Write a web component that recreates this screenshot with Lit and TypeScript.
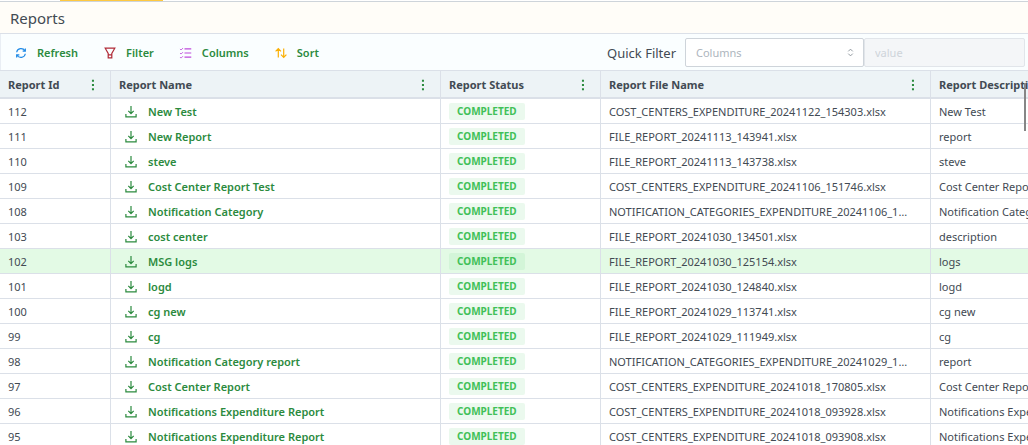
import { LitElement, html, css, svg } from "lit";
import { customElement, property } from "lit/decorators.js";

interface Report {
  id: number;
  name: string;
  file: string;
  description: string;
}

const report = (id: number, name: string, file: string, description: string): Report => ({ id, name, file, description });

const REPORTS: Report[] = [
  report(112, "New Test", "COST_CENTERS_EXPENDITURE_20241122_154303.xlsx", "New Test"),
  report(111, "New Report", "FILE_REPORT_20241113_143941.xlsx", "report"),
  report(110, "steve", "FILE_REPORT_20241113_143738.xlsx", "steve"),
  report(109, "Cost Center Report Test", "COST_CENTERS_EXPENDITURE_20241106_151746.xlsx", "Cost Center Report Test"),
  report(108, "Notification Category", "NOTIFICATION_CATEGORIES_EXPENDITURE_20241106_151612.xlsx", "Notification Category"),
  report(103, "cost center", "FILE_REPORT_20241030_134501.xlsx", "description"),
  report(102, "MSG logs", "FILE_REPORT_20241030_125154.xlsx", "logs"),
  report(101, "logd", "FILE_REPORT_20241030_124840.xlsx", "logd"),
  report(100, "cg new", "FILE_REPORT_20241029_113741.xlsx", "cg new"),
  report(99, "cg", "FILE_REPORT_20241029_111949.xlsx", "cg"),
  report(98, "Notification Category report", "NOTIFICATION_CATEGORIES_EXPENDITURE_20241029_111502.xlsx", "report"),
  report(97, "Cost Center Report", "COST_CENTERS_EXPENDITURE_20241018_170805.xlsx", "Cost Center Report"),
  report(96, "Notifications Expenditure Report", "COST_CENTERS_EXPENDITURE_20241018_093928.xlsx", "Notifications Expenditure"),
  report(95, "Notifications Expenditure Report", "COST_CENTERS_EXPENDITURE_20241018_093908.xlsx", "Notifications Expenditure"),
];

const SELECTED_ID = 102;

const ICONS: Record<string, unknown> = {
  refresh: svg`<path d="M2.2 7A6 6 0 0 1 13.2 5M13.8 9A6 6 0 0 1 2.8 11M13.8 2v3.6h-3.6M2.2 14v-3.6h3.6"/>`,
  filter: svg`<path d="M1.6 1.6h12.8L10.4 8.6v5.8H5.6V8.6zM5.6 10.4h4.8"/>`,
  columns: svg`<path d="M6 2.6h9M6 8h9M6 13.4h9"/><path d="m0 2.6 1.4 1.4L4 1.4M0 8l1.4 1.4L4 6.8M0 13.4l1.4 1.4L4 12.2" stroke-width="1.1"/>`,
  sort: svg`<path d="M4.4 14V2.4M.8 5.8l3.6-3.6L8 5.8M11.6 2v11.6M8 10.2l3.6 3.6 3.6-3.6"/>`,
  download: svg`<path d="M8 0v10M4.4 6.6 8 10.2l3.6-3.6M1.2 10.6v3.8h13.6v-3.8"/>`,
  chevrons: svg`<path d="M4 6 8 2l4 4M4 10l4 4 4-4"/>`,
  more: svg`<path d="M6.6 1h2.7v2.7H6.6zM6.6 6.6h2.7v2.7H6.6zM6.6 12.3h2.7V15H6.6z" fill="currentColor" stroke="none"/>`,
};

@customElement("ui-icon")
class UiIcon extends LitElement {
  @property() name = "";

  static styles = css`
    :host { display: inline-flex; flex: none; width: 12px; height: 12px; }
    svg { width: 100%; height: 100%; fill: none; stroke: currentColor; stroke-width: 1.6; overflow: visible; }
  `;

  render() {
    return html`<svg viewBox="0 0 16 16" aria-hidden="true">${ICONS[this.name]}</svg>`;
  }
}

@customElement("app-root")
class AppRoot extends LitElement {
  static styles = css`
    :host {
      display: flex;
      flex-direction: column;
      height: 100vh;
      overflow: hidden;
      background: #fff;
      color: #424a53;
      font: 11px/16px "Noto Sans", sans-serif;
    }
    * { box-sizing: border-box; }
    button, input, select { font: inherit; }
    button { padding: 0; border: 0; background: none; color: #2b8a3e; cursor: pointer; }
    .tabs { flex: none; height: 2px; padding-left: 60px; border-bottom: 1px solid #ced4da; }
    .active-tab { width: 103px; height: 1px; background: #ffc940; }
    .title {
      flex: none;
      margin: 0;
      padding: 4px 10px 3px;
      border-bottom: 1px solid #dbe0e8;
      background: #fffdf8;
      font-size: 15px;
      line-height: 24px;
      font-weight: 400;
    }
    .toolbar {
      flex: none;
      display: flex;
      align-items: center;
      justify-content: space-between;
      height: 36px;
      padding: 1px 3px 0 14px;
      border-left: 1px solid #e9eef4;
      background: #fafeff;
    }
    .actions { display: flex; gap: 26px; }
    .action { display: flex; align-items: center; gap: 10px; font-weight: 600; }
    .blue { color: #228be6; }
    .red { color: #b02a37; }
    .purple { color: #be4bdb; }
    .orange { color: #fab005; }
    .quick { display: flex; align-items: center; }
    .quick-label { margin-right: 9px; font-size: 13px; }
    .picker { position: relative; display: flex; }
    .picker select, .value {
      height: 29px;
      padding: 0 10px;
      border: 1px solid #ced4da;
      border-radius: 2px;
    }
    .picker select { width: 179px; appearance: none; background: #fff; color: #adb5bd; }
    .picker ui-icon { position: absolute; right: 9px; top: 10px; width: 9px; height: 9px; color: #868e96; pointer-events: none; }
    .value { width: 161px; border-color: #e1e5ea; background: #f4f6f8; }
    .value::placeholder { color: #ced4da; opacity: 1; }
    .grid { position: relative; flex: 1; min-height: 0; overflow: hidden; border-top: 1px solid #dbe0e8; }
    table { width: 100%; min-width: 1131px; table-layout: fixed; border-collapse: separate; border-spacing: 0; }
    .col-id { width: 111px; }
    .col-wide { width: 330px; }
    .col-status { width: 160px; }
    th, td {
      padding: 1px 8px 0;
      border-right: 1px solid #dbe0e8;
      border-bottom: 1px solid #dbe0e8;
      text-align: left;
      white-space: nowrap;
      overflow: hidden;
      text-overflow: ellipsis;
    }
    th { height: 28px; padding-top: 2px; border-bottom-width: 2px; background: #edf3f6; font-weight: 700; }
    td { height: 25px; padding-right: 20px; }
    .head { display: flex; align-items: center; justify-content: space-between; padding-right: 3px; }
    .head button { display: flex; }
    .selected td { background: #e3fae5; }
    .name { display: flex; align-items: center; gap: 11px; padding-left: 6px; }
    .name button { display: flex; }
    .name a { color: #2b8a3e; font-weight: 600; text-decoration: none; }
    .badge {
      display: block;
      width: max-content;
      padding: 0 8px;
      border-radius: 2px;
      background: #ebf9ee;
      color: #40c057;
      font-size: 10px;
      line-height: 17px;
      font-weight: 700;
    }
    .selected .badge { background: #d3f5d8; }
    .thumb { position: absolute; top: 12px; right: 2px; width: 2px; height: 48px; background: #868686; }
  `;

  private action(icon: string, tone: string, label: string) {
    return html`<button class="action"><ui-icon class=${tone} name=${icon}></ui-icon>${label}</button>`;
  }

  private heading(label: string) {
    return html`<th scope="col">
      <div class="head">${label}<button aria-label="${label} menu"><ui-icon name="more"></ui-icon></button></div>
    </th>`;
  }

  private row(r: Report) {
    return html`<tr class=${r.id === SELECTED_ID ? "selected" : ""}>
      <td>${r.id}</td>
      <td>
        <div class="name">
          <button aria-label="Download ${r.name}"><ui-icon name="download"></ui-icon></button>
          <a href="#report-${r.id}">${r.name}</a>
        </div>
      </td>
      <td><span class="badge">COMPLETED</span></td>
      <td>${r.file}</td>
      <td>${r.description}</td>
    </tr>`;
  }

  render() {
    return html`
      <div class="tabs"><div class="active-tab"></div></div>
      <h1 class="title">Reports</h1>
      <div class="toolbar">
        <div class="actions">
          ${this.action("refresh", "blue", "Refresh")}
          ${this.action("filter", "red", "Filter")}
          ${this.action("columns", "purple", "Columns")}
          ${this.action("sort", "orange", "Sort")}
        </div>
        <div class="quick">
          <label class="quick-label" for="column">Quick Filter</label>
          <div class="picker">
            <select id="column"><option>Columns</option></select>
            <ui-icon name="chevrons"></ui-icon>
          </div>
          <input class="value" aria-label="Filter value" placeholder="value" disabled />
        </div>
      </div>
      <div class="grid">
        <table>
          <colgroup>
            <col class="col-id" /><col class="col-wide" /><col class="col-status" /><col class="col-wide" /><col />
          </colgroup>
          <thead>
            <tr>
              ${["Report Id", "Report Name", "Report Status", "Report File Name", "Report Description"].map((h) => this.heading(h))}
            </tr>
          </thead>
          <tbody>${REPORTS.map((r) => this.row(r))}</tbody>
        </table>
        <div class="thumb"></div>
      </div>
    `;
  }
}
